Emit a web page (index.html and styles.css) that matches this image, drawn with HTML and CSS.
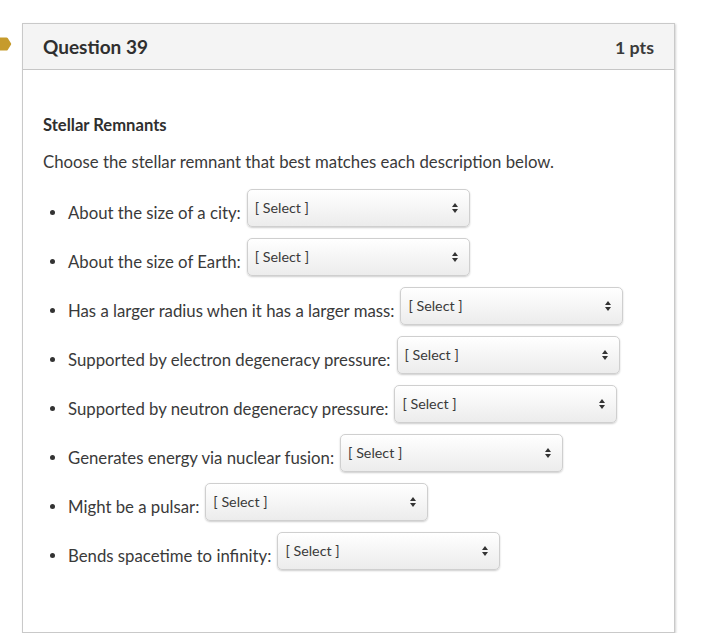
FILE: index.html
```html
<!DOCTYPE html>
<html lang="en">
<head>
<meta charset="utf-8">
<title>Question 39</title>
<link rel="stylesheet" href="styles.css">
</head>
<body>
<div class="page">
  <svg class="flag" width="12" height="16" viewBox="0 0 12 16" aria-hidden="true">
    <path d="M0 1.5 H6.5 Q7.2 1.5 7.7 2.1 L11 7.2 Q11.4 8 11 8.8 L7.7 13.9 Q7.2 14.5 6.5 14.5 H0 Z" fill="#c69b2c"/>
  </svg>
  <div class="card">
    <div class="card-header">
      <span class="q-title">Question 39</span>
      <span class="q-pts">1 pts</span>
    </div>
    <div class="card-body">
      <p class="q-heading">Stellar Remnants</p>
      <p class="q-intro">Choose the stellar remnant that best matches each description below.</p>
      <ul class="q-list">
        <li><span class="lbl">About the size of a city:</span><span class="sel"><span class="sel-text">[ Select ]</span><svg class="arr" width="6" height="10" viewBox="0 0 6 10"><path d="M3 0 L6 4 H0 Z M3 10 L6 6 H0 Z" fill="#333"/></svg></span></li>
        <li><span class="lbl">About the size of Earth:</span><span class="sel"><span class="sel-text">[ Select ]</span><svg class="arr" width="6" height="10" viewBox="0 0 6 10"><path d="M3 0 L6 4 H0 Z M3 10 L6 6 H0 Z" fill="#333"/></svg></span></li>
        <li><span class="lbl">Has a larger radius when it has a larger mass:</span><span class="sel"><span class="sel-text">[ Select ]</span><svg class="arr" width="6" height="10" viewBox="0 0 6 10"><path d="M3 0 L6 4 H0 Z M3 10 L6 6 H0 Z" fill="#333"/></svg></span></li>
        <li><span class="lbl">Supported by electron degeneracy pressure:</span><span class="sel"><span class="sel-text">[ Select ]</span><svg class="arr" width="6" height="10" viewBox="0 0 6 10"><path d="M3 0 L6 4 H0 Z M3 10 L6 6 H0 Z" fill="#333"/></svg></span></li>
        <li><span class="lbl">Supported by neutron degeneracy pressure:</span><span class="sel"><span class="sel-text">[ Select ]</span><svg class="arr" width="6" height="10" viewBox="0 0 6 10"><path d="M3 0 L6 4 H0 Z M3 10 L6 6 H0 Z" fill="#333"/></svg></span></li>
        <li><span class="lbl">Generates energy via nuclear fusion:</span><span class="sel"><span class="sel-text">[ Select ]</span><svg class="arr" width="6" height="10" viewBox="0 0 6 10"><path d="M3 0 L6 4 H0 Z M3 10 L6 6 H0 Z" fill="#333"/></svg></span></li>
        <li><span class="lbl">Might be a pulsar:</span><span class="sel"><span class="sel-text">[ Select ]</span><svg class="arr" width="6" height="10" viewBox="0 0 6 10"><path d="M3 0 L6 4 H0 Z M3 10 L6 6 H0 Z" fill="#333"/></svg></span></li>
        <li><span class="lbl">Bends spacetime to infinity:</span><span class="sel"><span class="sel-text">[ Select ]</span><svg class="arr" width="6" height="10" viewBox="0 0 6 10"><path d="M3 0 L6 4 H0 Z M3 10 L6 6 H0 Z" fill="#333"/></svg></span></li>
      </ul>
    </div>
  </div>
</div>
</body>
</html>
```

FILE: styles.css
```css
* { box-sizing: border-box; }

body {
  margin: 0;
  background: #ffffff;
  font-family: Lato, "Open Sans", "Liberation Sans", sans-serif;
  color: #343434;
}

.page {
  position: relative;
  padding: 23px 0 0 22px;
}

.flag {
  position: absolute;
  left: 0;
  top: 36px;
}

.card {
  width: 653px;
  height: 610px;
  border: 1px solid #c9c9c9;
  box-shadow: 1px 1px 2px rgba(0, 0, 0, 0.18);
  background: #fff;
}

.card-header {
  height: 46px;
  background: #f4f4f4;
  border-bottom: 1px solid #c6c6c6;
  display: flex;
  align-items: center;
  justify-content: space-between;
  padding: 0 20px 0 20px;
}

.q-title {
  font-size: 19px;
  font-weight: 700;
  color: #2f2f2f;
}

.q-pts {
  font-size: 17.8px;
  font-weight: 700;
  color: #3a3a3a;
}

.card-body {
  padding: 45px 20px 0 20px;
}

.q-heading {
  margin: 0;
  font-size: 16.6px;
  line-height: 20px;
  font-weight: 700;
  color: #2f2f2f;
}

.q-intro {
  margin: 17px 0 0 0;
  font-size: 16.75px;
  line-height: 20px;
  color: #3a3a3a;
}

.q-list {
  margin: 17px 0 0 0;
  padding: 0 0 0 25px;
  list-style: none;
}

.q-list li {
  display: flex;
  align-items: center;
  font-size: 16.75px;
  height: 38px;
  margin-bottom: 11px;
  color: #3a3a3a;
}

.q-list li::before {
  content: "";
  flex: none;
  width: 5px;
  height: 5px;
  border-radius: 50%;
  background: #333;
  margin: 8px 13px 0 -18px;
}

.lbl {
  line-height: 20px;
  padding-top: 10px;
  margin-right: 6px;
}

.sel {
  display: flex;
  align-items: flex-start;
  justify-content: space-between;
  flex: none;
  width: 223px;
  height: 38px;
  padding: 9px 11px 0 7px;
  border: 1px solid #cfcfcf;
  border-radius: 5px;
  background: linear-gradient(#ffffff, #ececec);
  box-shadow: 0 1px 2px rgba(0, 0, 0, 0.2);
  line-height: 17px;
}

.sel-text {
  font-size: 14.3px;
  color: #3a3a3a;
}

.arr {
  margin-top: 4px;
}
```
